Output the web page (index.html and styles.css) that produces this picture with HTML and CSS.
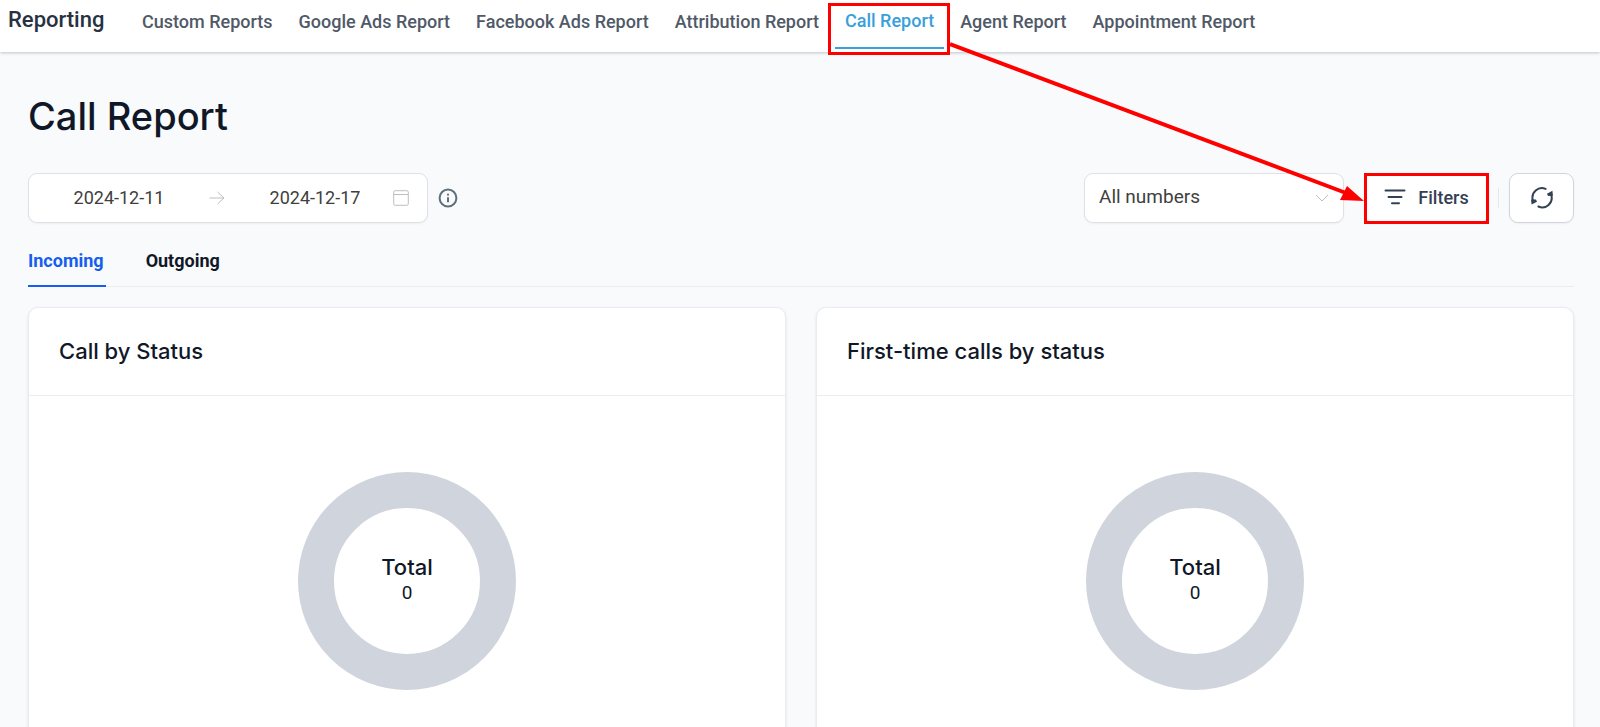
FILE: index.html
```
<!DOCTYPE html>
<html lang="en">
<head>
  <meta charset="UTF-8">
  <meta name="viewport" content="width=device-width, initial-scale=1.0">
  <title>Call Report</title>
  <link rel="stylesheet" href="styles.css">
</head>
<body>
  <header class="topbar">
    <h2 class="topbar-title">Reporting</h2>
    <nav class="topbar-nav">
      <a href="#">Custom Reports</a>
      <a href="#">Google Ads Report</a>
      <a href="#">Facebook Ads Report</a>
      <a href="#">Attribution Report</a>
      <a href="#" class="active marked">Call Report</a>
      <a href="#">Agent Report</a>
      <a href="#">Appointment Report</a>
    </nav>
  </header>

  <main class="page">
    <h1 class="page-title">Call Report</h1>

    <div class="toolbar">
      <div class="date-range">
        <input type="text" value="2024-12-11" aria-label="Start date">
        <svg class="range-arrow" width="16" height="16" viewBox="0 0 16 16"><path d="M0.5 8h14.5M8.5 2l6.5 6-6.5 6"/></svg>
        <input type="text" value="2024-12-17" aria-label="End date">
        <svg width="16" height="16" viewBox="0 0 16 16"><rect x="0.7" y="0.7" width="14.6" height="14.6" rx="1.5"/><path d="M0.7 4.5h14.6"/></svg>
      </div>
      <svg class="info-icon" width="20" height="20" viewBox="0 0 20 20"><circle cx="10" cy="10" r="8.4"/><path d="M10 9.2v5M10 5.8v1.8"/></svg>

      <div class="select-box">
        <select aria-label="Phone number">
          <option>All numbers</option>
        </select>
        <svg width="14" height="14" viewBox="0 0 14 14"><path d="M1 4l6 6 6-6"/></svg>
      </div>

      <button type="button" class="btn btn-filters marked">
        <svg width="22" height="18" viewBox="0 0 22 18"><path d="M1.5 2.5h19M4.5 9h13M8 15.3h7"/></svg>
        Filters
      </button>
      <span class="divider"></span>
      <button type="button" class="btn btn-refresh" aria-label="Refresh">
        <svg width="24" height="24" viewBox="0 0 24 24">
          <path d="M15.6 2.9A9.4 9.4 0 0 0 2.8 14M8.4 20.5A9.4 9.4 0 0 0 21.2 9"/>
          <path class="tip" d="M17 7.8L22.4 4.8 23 9.8 18 10zM7 15.8L1.6 18.6 1 13.6 6 13.4z"/>
        </svg>
      </button>
    </div>

    <div class="tabs" role="tablist">
      <button type="button" role="tab" aria-selected="true" class="tab active">Incoming</button>
      <button type="button" role="tab" aria-selected="false" class="tab">Outgoing</button>
    </div>

    <div class="cards">
      <section class="card">
        <h3 class="card-title">Call by Status</h3>
        <div class="card-body">
          <div class="donut">
            <span class="donut-label">Total</span>
            <span class="donut-value">0</span>
          </div>
        </div>
      </section>
      <section class="card">
        <h3 class="card-title">First-time calls by status</h3>
        <div class="card-body">
          <div class="donut">
            <span class="donut-label">Total</span>
            <span class="donut-value">0</span>
          </div>
        </div>
      </section>
    </div>
  </main>

  <!-- Arrow from the Call Report tab to the Filters button -->
  <svg class="guide-arrow" viewBox="0 0 414 160" preserveAspectRatio="none">
    <path class="line" d="M0 3L396 152"/>
    <path class="head" d="M414 160L397 145 390 159z"/>
  </svg>
</body>
</html>
```
FILE: styles.css
```
* {
  box-sizing: border-box;
}

body {
  position: relative;
  height: 100vh;
  margin: 0;
  overflow: hidden;
  background-color: #f9fafb;
  color: #101828;
  font-family: Roboto, "Liberation Sans", sans-serif;
  font-size: 18px;
}

h1, h2, h3 {
  margin: 0;
  font-weight: 500;
}

button, input, select {
  font: inherit;
}

svg {
  flex-shrink: 0;
  fill: none;
  stroke: #bfbfbf;
}

/* Top navigation */
.topbar {
  display: flex;
  height: 52px;
  padding-left: 8px;
  background-color: #fff;
  box-shadow: 0 1px 3px rgba(16, 24, 40, 0.24);
}

.topbar-title {
  width: 124px;
  color: #273141;
  font-size: 22px;
  line-height: 40px;
}

.topbar-nav {
  display: flex;
  gap: 6px;
}

.topbar-nav a {
  height: 49px;
  padding: 0 10px;
  color: #505968;
  font-weight: 500;
  line-height: 44px;
  text-decoration: none;
  white-space: nowrap;
}

.topbar-nav a.active {
  border-bottom: 2px solid #38a0db;
  color: #38a0db;
  line-height: 42px;
}

/* Red frame round the highlighted controls */
.marked {
  position: relative;
}

.marked::after {
  content: "";
  position: absolute;
  border: 3px solid #f00;
}

.topbar-nav .marked::after {
  inset: 3px -6px -8px -7px;
}

.btn.marked::after {
  inset: -1px -1px -2px;
}

/* Page */
.page {
  padding: 39px 26px 0 28px;
}

.page-title {
  font-family: Inter, sans-serif;
  font-size: 38px;
  line-height: 50px;
}

.toolbar {
  display: flex;
  align-items: center;
  margin-top: 32px;
}

.date-range,
.select-box,
.btn {
  display: flex;
  align-items: center;
  height: 50px;
  border: 1px solid #dfe1e7;
  border-radius: 9px;
  background-color: #fff;
  box-shadow: 0 1px 2px rgba(16, 24, 40, 0.05);
}

.date-range {
  width: 400px;
  padding-left: 12px;
}

.date-range input {
  width: 156px;
  padding: 0 0 2px;
  border: 0;
  outline: none;
  background: none;
  color: #404040;
  text-align: center;
}

.range-arrow {
  margin: 0 12px;
}

.info-icon {
  margin-left: 10px;
  stroke: #5f6f7a;
  stroke-width: 2;
}

.select-box {
  position: relative;
  width: 260px;
  margin-left: auto;
}

.select-box select {
  width: 100%;
  height: 100%;
  padding: 0 14px 4px;
  border: 0;
  outline: none;
  appearance: none;
  background: none;
  color: #404040;
  font-size: 19px;
}

.select-box svg {
  position: absolute;
  right: 14px;
}

.btn {
  justify-content: center;
  padding: 0;
  border-color: #d0d5dd;
  color: #344054;
  font-weight: 500;
}

.btn svg {
  stroke: #344054;
  stroke-width: 2;
  stroke-linecap: round;
}

.btn .tip {
  fill: #344054;
  stroke: none;
}

.btn-filters {
  gap: 12px;
  width: 125px;
  margin-left: 20px;
  padding-bottom: 2px;
}

.divider {
  width: 1px;
  height: 20px;
  margin: 0 10px 0 9px;
  background-color: #e5e7eb;
}

.btn-refresh {
  width: 65px;
}

.tabs {
  display: flex;
  gap: 40px;
  height: 64px;
  border-bottom: 1px solid #eaecf0;
}

.tab {
  height: 64px;
  padding: 12px 2px 0 0;
  border: 0;
  border-bottom: 2px solid transparent;
  background: none;
  color: #101828;
  font-weight: 700;
}

.tab.active {
  border-color: #155eef;
  color: #155eef;
}

/* Cards */
.cards {
  display: grid;
  grid-template-columns: 1fr 1fr;
  gap: 30px;
  margin-top: 20px;
}

.card {
  border: 1px solid #eaecf0;
  border-radius: 10px;
  background-color: #fff;
  box-shadow: 0 1px 3px rgba(16, 24, 40, 0.1);
}

.card-title {
  padding: 28px 30px 29px;
  border-bottom: 1px solid #eaecf0;
  font-family: Inter, sans-serif;
  font-size: 22px;
  line-height: 30px;
}

.card-body {
  display: flex;
  justify-content: center;
  padding: 76px 30px;
}

.donut {
  display: flex;
  flex-direction: column;
  align-items: center;
  justify-content: center;
  width: 218px;
  height: 218px;
  padding-bottom: 4px;
  border: 36px solid #d0d5dd;
  border-radius: 50%;
}

.donut-label {
  font-family: Inter, sans-serif;
  font-size: 22px;
  font-weight: 500;
  line-height: 28px;
}

.donut-value {
  font-size: 19px;
  line-height: 24px;
}

.guide-arrow {
  position: absolute;
  top: 41px;
  left: 950px;
  width: calc(100% - 1186px);
  height: 160px;
}

.guide-arrow .line {
  stroke: #f00;
  stroke-width: 4;
}

.guide-arrow .head {
  fill: #f00;
  stroke: none;
}
```
